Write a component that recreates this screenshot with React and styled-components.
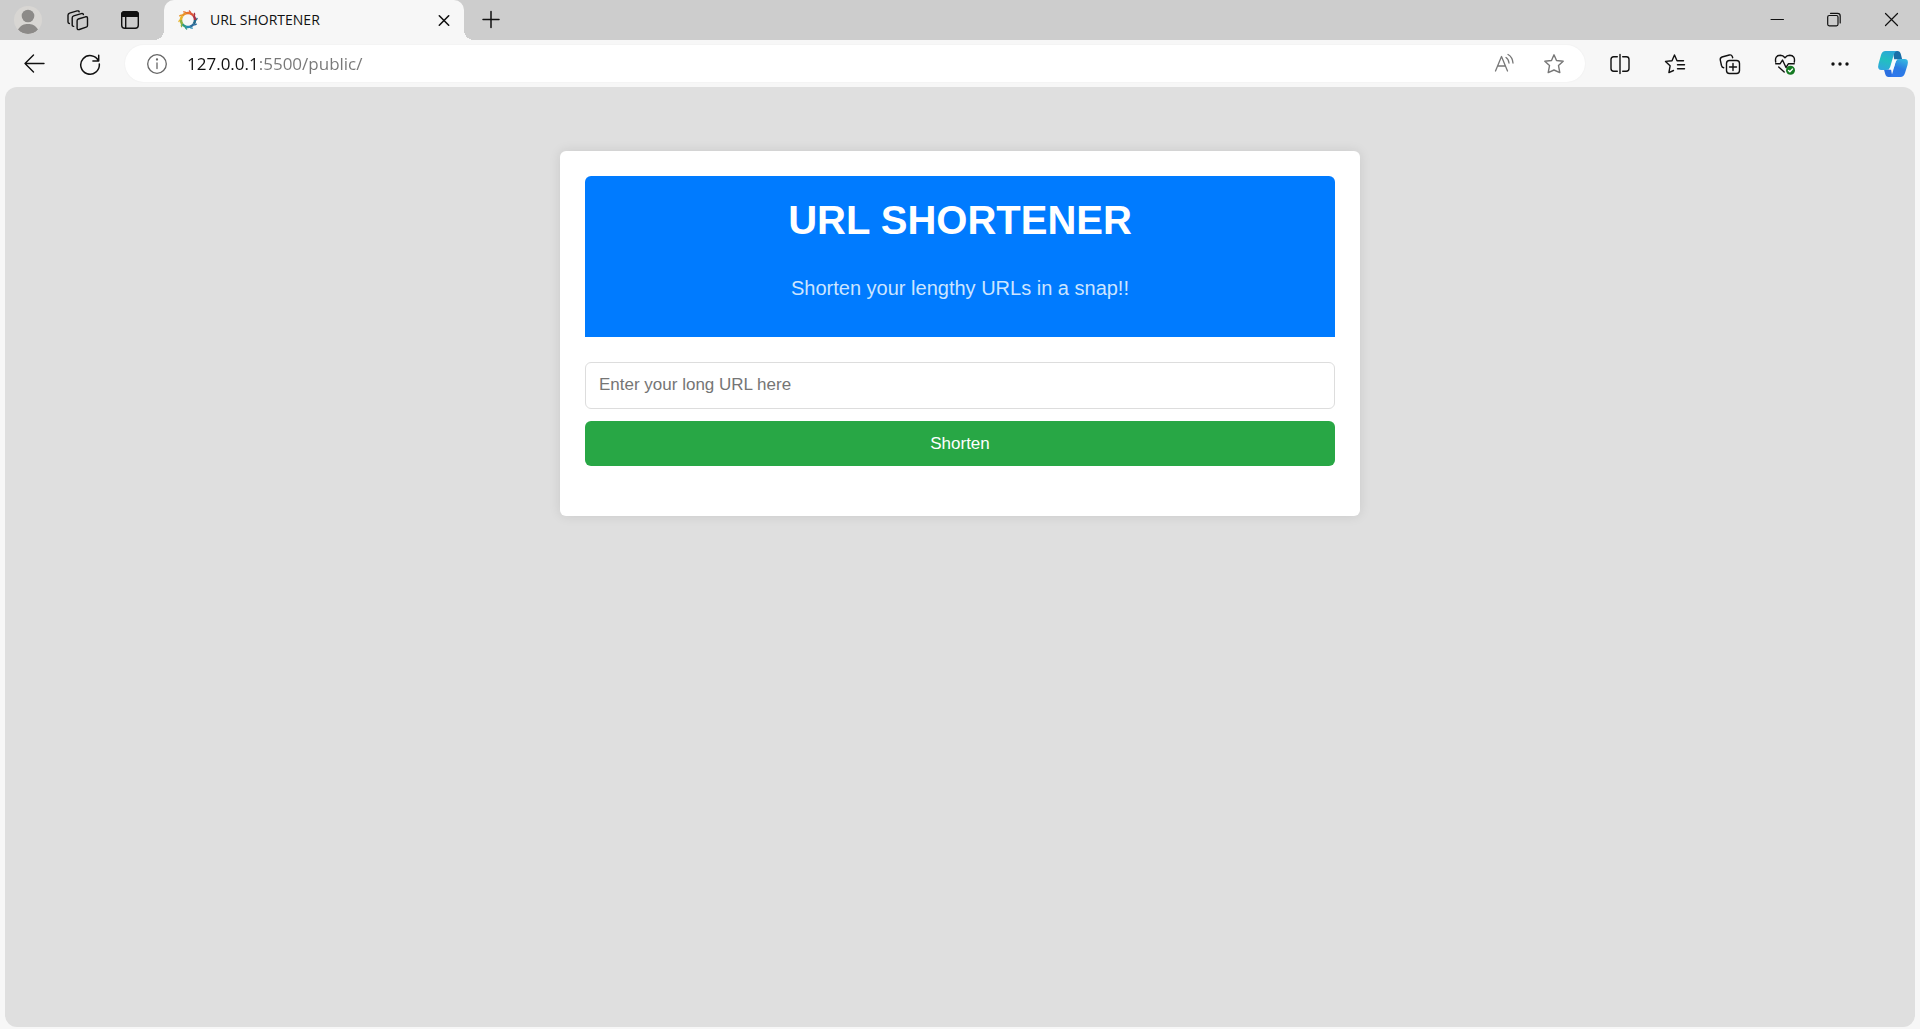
import React from "react";
import styled, { createGlobalStyle } from "styled-components";

const GlobalStyle = createGlobalStyle`
  * { box-sizing: border-box; }
  body { margin: 0; background: #f7f7f7; }
  button, input { font: inherit; margin: 0; }
`;

const uiFont = `"Open Sans", "Segoe UI", "Noto Sans", sans-serif`;
const pageFont = `Arial, "Liberation Sans", sans-serif`;

const Window = styled.div`
  display: flex;
  flex-direction: column;
  min-height: 100vh;
  background: #f7f7f7;
  font-family: ${uiFont};
`;

const TitleBar = styled.header`
  display: flex;
  height: 40px;
  padding-left: 2px;
  background: #cdcdcd;
`;

const IconButton = styled.button`
  display: flex;
  flex: none;
  align-items: center;
  justify-content: center;
  width: ${(p) => p.$width}px;
  padding: 0;
  border: 0;
  background: none;
  color: ${(p) => p.$color || "#111"};
`;

const Tab = styled.div`
  position: relative;
  display: flex;
  align-items: center;
  width: 300px;
  margin-left: 9px;
  padding-left: 14px;
  border-radius: 10px 10px 0 0;
  background: #f7f7f7;

  &::before,
  &::after {
    content: "";
    position: absolute;
    bottom: 0;
    width: 10px;
    height: 10px;
  }
  &::before {
    right: 100%;
    background: radial-gradient(circle at 0 0, transparent 10px, #f7f7f7 10px);
  }
  &::after {
    left: 100%;
    background: radial-gradient(circle at 100% 0, transparent 10px, #f7f7f7 10px);
  }
`;

const TabTitle = styled.span`
  flex: 1;
  padding-left: 12px;
  font-size: 14px;
  line-height: 20px;
  color: #111;
`;

const WindowControls = styled.div`
  display: flex;
  margin-left: auto;
`;

const Toolbar = styled.nav`
  display: flex;
  height: 47px;
  padding: 5px 1px 5px 7px;
`;

const AddressBar = styled.div`
  display: flex;
  flex: 1;
  margin: 0 7px 0 8px;
  padding-right: 6px;
  border-radius: 19px;
  background: #fff;
  box-shadow: 0 0 2px rgba(0, 0, 0, 0.06);
`;

const AddressInput = styled.input`
  flex: 1;
  min-width: 0;
  padding: 0;
  border: 0;
  outline: 0;
  font-size: 17px;
  line-height: 24px;
  color: transparent;
  background: linear-gradient(to right, #111 72px, #777 72px);
  background-clip: text;
  -webkit-background-clip: text;
`;

const Viewport = styled.main`
  flex: 1;
  margin: 0 5px 2px;
  padding: 64px 20px 20px;
  border-radius: 12px;
  background: #dfdfdf;
  font-family: ${pageFont};
`;

const Card = styled.section`
  max-width: 800px;
  margin: 0 auto;
  padding: 25px 25px 50px;
  border-radius: 6px;
  background: #fff;
  box-shadow: 0 0 12px rgba(0, 0, 0, 0.1);
`;

const Banner = styled.div`
  padding: 20px 20px 37px;
  border-radius: 6px 6px 0 0;
  background: #007bff;
  text-align: center;
`;

const Heading = styled.h1`
  margin: 0;
  font-size: 40px;
  line-height: 48px;
  color: #fff;
`;

const Tagline = styled.p`
  margin: 32px 0 0;
  font-size: 20px;
  line-height: 24px;
  color: #cce5ff;
`;

const Form = styled.form`
  display: flex;
  flex-direction: column;
  gap: 12px;
  margin-top: 25px;
  font-size: 17px;
`;

const UrlInput = styled.input`
  height: 47px;
  padding: 0 13px 2px;
  border: 1px solid #ddd;
  border-radius: 6px;
  background: #fff;
  color: #333;

  &::placeholder { color: #757575; }
`;

const SubmitButton = styled.button`
  height: 45px;
  padding: 0;
  border: 0;
  border-radius: 6px;
  background: #28a745;
  color: #fff;
`;

const Glyph = ({ children, size = 24, weight = 1.4 }) => (
  <svg
    width={size}
    height={size}
    viewBox={`0 0 ${size} ${size}`}
    fill="none"
    stroke="currentColor"
    strokeWidth={weight}
    strokeLinecap="round"
    strokeLinejoin="round"
    aria-hidden="true"
  >
    {children}
  </svg>
);

const Avatar = () => (
  <Glyph size={30}>
    <clipPath id="avatar"><circle cx="15" cy="15" r="14" /></clipPath>
    <circle cx="15" cy="15" r="14" fill="#d8d6d3" stroke="none" />
    <g clipPath="url(#avatar)" fill="#8c8a88" stroke="none">
      <circle cx="15" cy="11" r="6.3" />
      <path d="M5 24.500C8 20 11 19 15 19s7 1 10 5.500C22 28 19 29 15 29S8 28 5 24.500z" />
    </g>
  </Glyph>
);

const Workspaces = () => (
  <Glyph>
    <path d="M11.300 11l7.200-2.200q2-.5 2 1.500v7.200q0 1.300-1.300 1.700l-6.900 2.300q-2.200.6-2.200-1.400v-7.300q0-1.400 1.200-1.800z" />
    <path d="M6.700 18.400Q5.200 18.500 5.200 17V10q0-1.600 1.500-2.100l7.600-2.300q1.900-.3 2.100 1" />
    <path d="M2.400 15.500Q1 15.400 1 14V7.300q0-1.700 1.500-2.100l7.600-2.300q1.900-.3 2.100 1" />
  </Glyph>
);

const TabActions = () => (
  <Glyph>
    <rect x="3.700" y="3.700" width="16.600" height="16.600" rx="3" />
    <path d="M3.700 8.200V6.500q0-2.800 2.800-2.800h11q2.800 0 2.800 2.800v1.700z" fill="currentColor" />
    <path d="M7.700 8v12.300" />
  </Glyph>
);

const ringColors = ["#23698b", "#2c6a9b", "#278bb4", "#2a9a80", "#8fb340", "#e7b52c", "#e99324", "#e8742c", "#dc5438", "#a83044"];

const Favicon = () => (
  <svg width="20" height="20" viewBox="0 0 20 20" aria-hidden="true">
    {ringColors.map((color, i) => (
      <g key={color} transform={`rotate(${i * 36} 10 10)`} fill="none" stroke={color}>
        <path d="M17 10A7 7 0 0 1 15.660 14.110" strokeWidth="2.500" />
        <path d="M17.500 10.500q1.500-.8 1.700-2.600" strokeWidth="1.300" />
      </g>
    ))}
  </svg>
);

const Copilot = () => (
  <svg width="32" height="30" viewBox="0 0 32 30" aria-hidden="true">
    <defs>
      <linearGradient id="cpLeft" x1="0.600" y1="0" x2="0.300" y2="1">
        <stop offset="0" stopColor="#2ba7d8" />
        <stop offset="0.500" stopColor="#22bfc0" />
        <stop offset="1" stopColor="#31a8dd" />
      </linearGradient>
      <linearGradient id="cpRight" x1="0.700" y1="0" x2="0.300" y2="1">
        <stop offset="0" stopColor="#35b5e0" />
        <stop offset="0.500" stopColor="#2b7be2" />
        <stop offset="1" stopColor="#2f78ee" />
      </linearGradient>
    </defs>
    <path d="M16 2h4.500q2.500 0 3.300 3l1.400 5.500h-8z" fill="#1a6fa8" />
    <path d="M15.500 28h-4q-2.500 0-3.300-3L7 20.500h7z" fill="#2a6fe0" />
    <path d="M8.500 2H20q-2.300.3-3.200 3.500l-3.500 12Q12.300 21 9 21H4.500Q0 21 1.500 15L4 6Q5.200 2 8.500 2z" fill="url(#cpLeft)" />
    <path d="M23.500 28H12q2.400-.3 3.300-3.500l3.400-12Q19.700 10 22 10h6Q32 10 30.500 16L28 24q-1.200 4-4.500 4z" fill="url(#cpRight)" />
    <path d="M17.300 10.500h3q-1.200.8-1.700 2.500l-1.700 5.500q-.7 2-2.300 2h-2.800q1.500-.8 2-2.600l1.500-5q.6-2.200 2-2.400z" fill="#f4fbff" />
  </svg>
);

const starPath = "M12 2.800l2.500 5.700 6.700.7-4.700 4.400 1.300 7L12 18l-5.800 2.600 1.300-7-4.700-4.400 6.700-.7z";

export default function App() {
  return (
    <Window>
      <GlobalStyle />
      <TitleBar>
        <IconButton $width={51} aria-label="Profile"><Avatar /></IconButton>
        <IconButton $width={51} aria-label="Workspaces"><Workspaces /></IconButton>
        <IconButton $width={51} aria-label="Tab actions menu"><TabActions /></IconButton>
        <Tab>
          <Favicon />
          <TabTitle>URL SHORTENER</TabTitle>
          <IconButton $width={40} aria-label="Close tab">
            <Glyph weight={1.600}><path d="M7.300 7.800l9.400 9.400M16.700 7.800l-9.400 9.400" /></Glyph>
          </IconButton>
        </Tab>
        <IconButton $width={54} aria-label="New tab">
          <Glyph weight={1.500}><path d="M12 3.500v16M4 11.500h16" /></Glyph>
        </IconButton>
        <WindowControls>
          <IconButton $width={57} aria-label="Minimize">
            <Glyph weight={1}><path d="M5 11.500h12.500" /></Glyph>
          </IconButton>
          <IconButton $width={57} aria-label="Restore">
            <Glyph weight={1.200}>
              <rect x="4.700" y="7.500" width="10.300" height="10.300" rx="1.500" />
              <path d="M7.500 5.300h7q2.700 0 2.700 2.700v7" />
            </Glyph>
          </IconButton>
          <IconButton $width={57} aria-label="Close">
            <Glyph weight={1.200}><path d="M5.500 5.500l12 12M17.500 5.500l-12 12" /></Glyph>
          </IconButton>
        </WindowControls>
      </TitleBar>

      <Toolbar>
        <IconButton $width={55} aria-label="Back">
          <Glyph><path d="M21 11.500H2M10.500 3L2 11.500l8.500 8.500" /></Glyph>
        </IconButton>
        <IconButton $width={55} aria-label="Reload">
          <Glyph weight={1.500}>
            <path d="M20.500 9a9.300 9.300 0 1 0 .8 3M20.700 3.200v5.800h-5.800" />
          </Glyph>
        </IconButton>
        <AddressBar>
          <IconButton $width={62} $color="#666" aria-label="View site information">
            <Glyph weight={1.300}>
              <circle cx="13" cy="12" r="9.300" />
              <path d="M13 11v5.500" />
              <circle cx="13" cy="7.500" r="0.500" fill="currentColor" />
            </Glyph>
          </IconButton>
          <AddressInput aria-label="Address" defaultValue="127.0.0.1:5500/public/" />
          <IconButton $width={50} $color="#777" aria-label="Read aloud">
            <Glyph weight={1.300}>
              <path d="M3.500 19L9.500 4.500 15.500 19M5.500 14h8" />
              <path d="M14 5.500q2.500 1.500 3 5.500M16 2.500q4.500 2.500 5 8.500" />
            </Glyph>
          </IconButton>
          <IconButton $width={50} $color="#777" aria-label="Add to favorites">
            <Glyph><path d={starPath} /></Glyph>
          </IconButton>
        </AddressBar>
        <IconButton $width={55} aria-label="Split screen">
          <Glyph>
            <path d="M9.300 4.800H5.700q-2.700 0-2.700 2.700v9q0 2.700 2.700 2.700h3.600M14.700 4.800h3.600q2.700 0 2.700 2.700v9q0 2.700-2.700 2.700h-3.600M12 2.500v19" />
          </Glyph>
        </IconButton>
        <IconButton $width={55} aria-label="Favorites">
          <Glyph>
            <path d="M20.500 8.700H14L11.500 3 9 8.700l-6.500.7 4.600 4.400-1.200 6.800 4.600-2.100M14.500 12.700h7M14.500 16.700h7" />
          </Glyph>
        </IconButton>
        <IconButton $width={55} aria-label="Collections">
          <Glyph>
            <rect x="8.500" y="8.500" width="13" height="13" rx="3" />
            <path d="M15 11.500v7M11.500 15h7M5.700 15.700Q4 15.500 3.500 13.500L2.300 8.200Q1.800 5.800 4 5l7.300-2q2.200-.5 3 1.500l.4 1.200" />
          </Glyph>
        </IconButton>
        <IconButton $width={55} aria-label="Browser essentials">
          <Glyph>
            <path d="M2.700 10Q1.500 3.500 7.300 3.300q2.800 0 4.700 2.400 1.900-2.400 4.700-2.400Q22.500 3.500 21.300 10M2.700 11.700h4.500L9.500 8l3.500 7.500 2.500-3.800h5.700M5.700 15l5.500 5" />
            <circle cx="17.500" cy="18.300" r="4.500" fill="#147a22" stroke="none" />
            <path d="M15.500 18.400l1.400 1.300 2.600-2.700" stroke="#fff" />
          </Glyph>
        </IconButton>
        <IconButton $width={55} aria-label="Settings and more">
          <Glyph>
            <g fill="currentColor" stroke="none">
              <circle cx="5" cy="12" r="1.700" />
              <circle cx="12" cy="12" r="1.700" />
              <circle cx="19" cy="12" r="1.700" />
            </g>
          </Glyph>
        </IconButton>
        <IconButton $width={52} aria-label="Copilot"><Copilot /></IconButton>
      </Toolbar>

      <Viewport>
        <Card>
          <Banner>
            <Heading>URL SHORTENER</Heading>
            <Tagline>Shorten your lengthy URLs in a snap!!</Tagline>
          </Banner>
          <Form onSubmit={(e) => e.preventDefault()}>
            <UrlInput type="url" aria-label="Long URL" placeholder="Enter your long URL here" />
            <SubmitButton type="submit">Shorten</SubmitButton>
          </Form>
        </Card>
      </Viewport>
    </Window>
  );
}
